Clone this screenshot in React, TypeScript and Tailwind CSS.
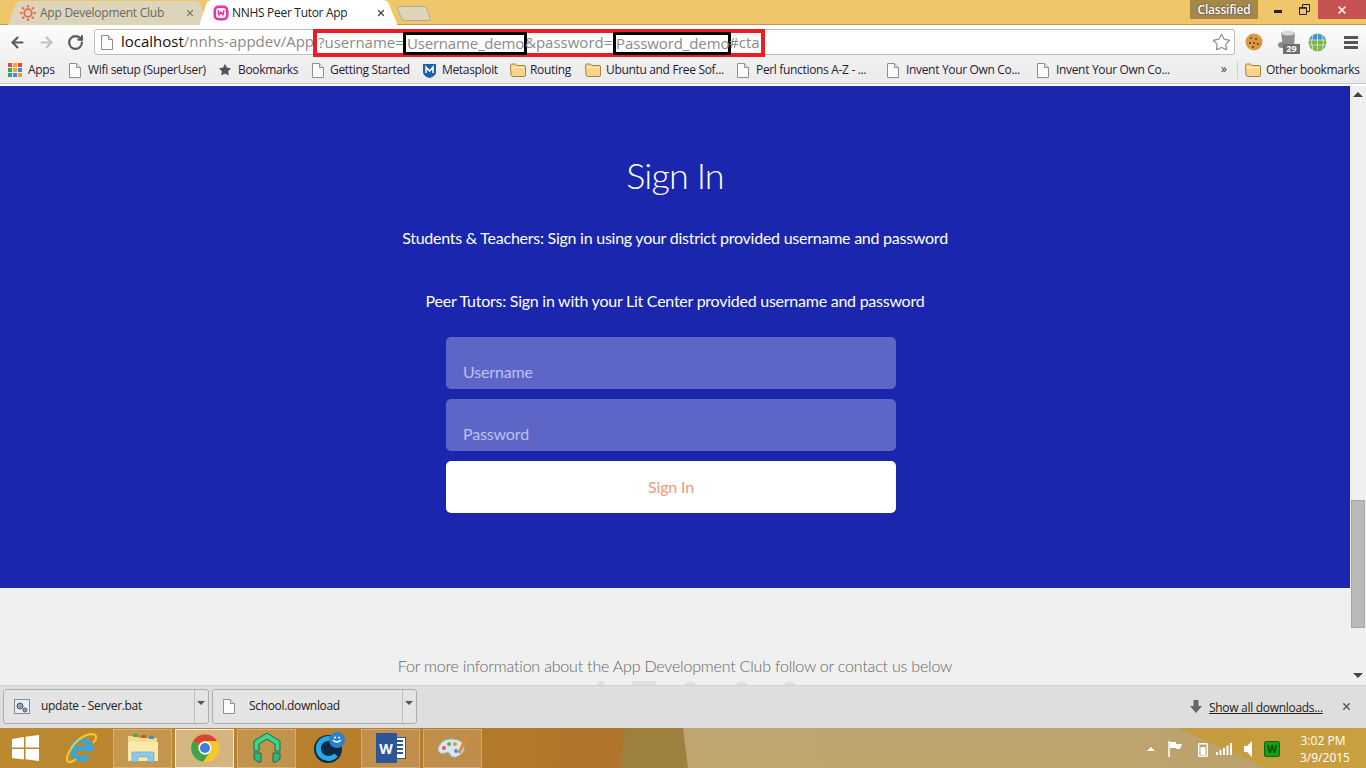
import React from 'react';
import { ArrowLeft, ArrowRight, RotateCw, Star, X } from 'lucide-react';

const chrome = "font-['Open_Sans',sans-serif]";

const PageIcon = ({ className = '' }: { className?: string }) => (
  <svg width="12" height="15" viewBox="0 0 12 15" className={className}>
    <path d="M.5.5h7l4 4v10H.5z" fill="#fbfbfb" stroke="#8f8f8f" />
    <path d="M7.5.5v4h4" fill="#e4e4e4" stroke="#8f8f8f" />
  </svg>
);

const FolderIcon = () => (
  <svg width="16" height="14" viewBox="0 0 16 14">
    <path d="M.5 2.500q0-1.500 1.500-1.500h3.500l1.500 1.500h7q1.500 0 1.500 1.500v8q0 1.500-1.500 1.500h-11q-1.500 0-2-1.500z" fill="#f8d48c" stroke="#a9803c" />
    <path d="M1.500 4.500h13" stroke="#fff0c8" />
  </svg>
);

const Bookmark = ({ icon, label, width, gap = 'gap-[6px]' }: { icon: React.ReactNode; label: string; width: number; gap?: string }) => (
  <div className={`flex items-center shrink-0 ${gap}`} style={{ width }}>
    {icon}
    <span className="whitespace-nowrap text-[12px] tracking-[-0.33px] text-[#2a1a35]">{label}</span>
  </div>
);

const CanvasIcon = () => (
  <svg width="16" height="16" viewBox="0 0 16 16">
    <circle cx="8" cy="8" r="3.800" fill="none" stroke="#e8674a" strokeWidth="1.800" />
    <g fill="#e8674a">
      <circle cx="8" cy="1.200" r="1.200" /><circle cx="8" cy="14.800" r="1.200" /><circle cx="1.200" cy="8" r="1.200" /><circle cx="14.800" cy="8" r="1.200" />
      <circle cx="3.200" cy="3.200" r="1.200" /><circle cx="12.800" cy="3.200" r="1.200" /><circle cx="3.200" cy="12.800" r="1.200" /><circle cx="12.800" cy="12.800" r="1.200" />
    </g>
  </svg>
);

const TabBar = () => (
  <div className={`${chrome} relative h-[25px] shrink-0 bg-[#efc76a] border-b border-[#b9984f]`}>
    <div className="absolute left-[8px] top-[1px] h-[24px] w-[198px] bg-[#dcd5bc] [clip-path:polygon(0_100%,4%_8%,7%_0,95%_0,97%_8%,100%_100%)] flex items-center pl-[12px] gap-[4px]">
      <CanvasIcon />
      <span className="text-[12px] tracking-[-0.25px] text-[#6a6a60] whitespace-nowrap">App Development Club</span>
      <X size={10} strokeWidth={3} className="absolute left-[177px] top-[7px] text-[#7b7b72]" />
    </div>
    <div className="absolute left-[199px] top-0 h-[26px] w-[199px] bg-white [clip-path:polygon(0_100%,4%_8%,6%_0,93%_0,95%_8%,100%_100%)] flex items-center pl-[14px] gap-[3px]">
      <svg width="16" height="16" viewBox="0 0 16 16">
        <rect x="0.500" y="0.500" width="15" height="15" rx="5" fill="#f032a8" />
        <rect x="3" y="3" width="10" height="10" rx="3" fill="#fff" />
        <path d="M5 5l1 5 2-3 2 3 1-5" fill="none" stroke="#f032a8" strokeWidth="1.400" />
      </svg>
      <span className="text-[12px] tracking-[-0.3px] text-[#222] whitespace-nowrap">NNHS Peer Tutor App</span>
      <X size={10} strokeWidth={3} className="absolute left-[177px] top-[8px] text-[#444]" />
    </div>
    <div className="absolute left-[399px] top-[6px] h-[15px] w-[30px] bg-[#dcd5bc] border border-[#b8ab84] rounded-[3px] [transform:skewX(20deg)]" />
    <div className="absolute left-[1190px] top-0 h-[19px] w-[68px] bg-[#a5874a] flex items-center justify-center text-[12px] font-semibold tracking-[-0.2px] text-white [text-shadow:0_0_2px_#333]">
      Classified
    </div>
    <div className="absolute right-0 top-0 h-[19px] w-[48px] bg-[#c75252] flex items-center justify-center">
      <X size={12} strokeWidth={3} className="text-white" />
    </div>
    <span className="absolute left-[1274px] top-[10px] h-[3px] w-[8px] bg-[#222]" />
    <svg width="11" height="11" viewBox="0 0 11 11" className="absolute left-[1299px] top-[4px]">
      <path d="M.5 3.500h7v7h-7zM3.500 3V.5h7v7H8" fill="none" stroke="#222" />
      <path d="M1 4h6" stroke="#222" strokeWidth="1.500" />
    </svg>
  </div>
);

const Toolbar = () => (
  <div className={`${chrome} h-[32px] shrink-0 flex items-center pt-[2px] bg-[linear-gradient(#fdfdfd,#f1f1f1)]`}>
    <div className="flex items-center w-[94px] shrink-0 pl-[9px] gap-[12px]">
      <ArrowLeft size={17} strokeWidth={3} className="text-[#5a5a5a]" />
      <ArrowRight size={17} strokeWidth={3} className="text-[#c2c2c2]" />
      <RotateCw size={17} strokeWidth={3} className="text-[#5a5a5a]" />
    </div>
    <div className="w-[1141px] h-[26px] shrink-0 flex items-center bg-white border border-[#bdbdbd] rounded-[3px] text-[15px] text-[#8a8a8a] relative">
      <PageIcon className="ml-[6px] mr-[8px]" />
      <span className="text-[#111] -mt-[1px]">localhost</span>
      <span className="-mt-[1px]">/nnhs-appdev/App</span>
      <div className="absolute left-[218px] -top-[1px] h-[28px] w-[452px] border-[4px] border-[#ed1c24] flex items-center text-[15px] whitespace-nowrap pb-[2px]">
        <span className="pl-[1px]">?username=</span>
        <span className="absolute left-[86px] -top-[1px] h-[23px] w-[124px] border-[3px] border-black flex items-center pl-[1px] pb-[1px] tracking-[-0.2px]">Username_demo</span>
        <span className="absolute left-[208px]">&amp;password=</span>
        <span className="absolute left-[296px] -top-[1px] h-[23px] w-[118px] border-[3px] border-black flex items-center pb-[1px] tracking-[-0.1px]">Password_demo</span>
        <span className="absolute left-[412px]">#cta</span>
      </div>
      <Star size={19} strokeWidth={1.5} className="absolute right-[3px] top-[3px] text-[#8c8c8c]" />
    </div>
    <div className="flex items-center ml-[10px] relative">
      <svg width="18" height="18" viewBox="0 0 18 18" className="mr-[14px]">
        <circle cx="9" cy="9" r="8.500" fill="#d99a45" />
        <g fill="#6a3a14"><circle cx="6" cy="5" r="1" /><circle cx="11" cy="6" r="1" /><circle cx="5" cy="10" r="1" /><circle cx="9" cy="10" r="1" /><circle cx="13" cy="11" r="1" /><circle cx="8" cy="14" r="1" /></g>
      </svg>
      <div className="relative w-[20px] h-[22px] mr-[11px]">
        <svg width="18" height="20" viewBox="0 0 18 20" className="absolute left-[1px] -top-[1px]">
          <path d="M3 2h14l-1 16H5z" fill="#8e8e8e" />
          <ellipse cx="10" cy="3" rx="7" ry="2.500" fill="#d8d8d8" />
          <ellipse cx="4" cy="15" rx="4" ry="3" fill="#8a8a8a" />
        </svg>
        <span className="absolute left-[6px] top-[13px] h-[10px] w-[17px] bg-[#6f6f6f] text-white text-[9px] font-bold leading-[10px] text-center">29</span>
      </div>
      <svg width="19" height="19" viewBox="0 0 19 19">
        <circle cx="9.500" cy="9.500" r="9" fill="#7cb342" />
        <path d="M1 7a9 9 0 0 1 17 0z" fill="#4a90d9" />
        <path d="M9.500.5v18M1 7h17M1 12h17M5 2q-3 7 0 15M14 2q3 7 0 15" fill="none" stroke="#d5e8f5" strokeWidth=".8" />
      </svg>
      <div className="flex flex-col gap-[2px] ml-[17px]">
        <span className="block w-[14px] h-[3px] bg-[#555]" />
        <span className="block w-[14px] h-[3px] bg-[#555]" />
        <span className="block w-[14px] h-[3px] bg-[#555]" />
      </div>
    </div>
  </div>
);

const AppsIcon = () => (
  <div className="grid grid-cols-3 gap-[1px] w-[14px]">
    {['#e8453c', '#f5a623', '#e8453c', '#34a853', '#f5a623', '#4285f4', '#34a853', '#4285f4', '#e8a33c'].map((c, i) => (
      <span key={i} className="block w-[4px] h-[4px]" style={{ backgroundColor: c }} />
    ))}
  </div>
);

const BookmarksBar = () => (
  <div className={`${chrome} relative h-[27px] shrink-0 flex items-center pl-[8px] bg-[linear-gradient(#f1f1f1,#ebebeb)] border-b border-[#c8c8c8]`}>
    <Bookmark icon={<AppsIcon />} label="Apps" width={61} />
    <Bookmark icon={<PageIcon />} label="Wifi setup (SuperUser)" width={149} gap="gap-[7px]" />
    <Bookmark icon={<Star size={14} fill="#555" strokeWidth={0} />} label="Bookmarks" width={94} />
    <Bookmark icon={<PageIcon />} label="Getting Started" width={111} />
    <Bookmark
      icon={
        <svg width="13" height="15" viewBox="0 0 13 15">
          <path d="M0 1h13v8q0 4-6.500 6Q0 13 0 9z" fill="#1f5fa8" />
          <path d="M3 10V4l3.500 4L10 4v6" fill="none" stroke="#fff" strokeWidth="1.500" />
        </svg>
      }
      label="Metasploit"
      width={87}
    />
    <Bookmark icon={<FolderIcon />} label="Routing" width={75} gap="gap-[4px]" />
    <Bookmark icon={<FolderIcon />} label="Ubuntu and Free Sof..." width={152} gap="gap-[5px]" />
    <Bookmark icon={<PageIcon />} label="Perl functions A-Z - ..." width={150} gap="gap-[7px]" />
    <Bookmark icon={<PageIcon />} label="Invent Your Own Co..." width={150} gap="gap-[7px]" />
    <Bookmark icon={<PageIcon />} label="Invent Your Own Co..." width={150} gap="gap-[7px]" />
    <span className="absolute left-[1221px] top-[3px] text-[12px] text-[#333]">»</span>
    <span className="absolute left-[1237px] top-[4px] h-[18px] w-px bg-[#d0d0d0]" />
    <div className="absolute left-[1245px] top-[4px]">
      <Bookmark icon={<FolderIcon />} label="Other bookmarks" width={118} gap="gap-[5px]" />
    </div>
  </div>
);

const Field = ({ label }: { label: string }) => (
  <div className="h-[52px] w-[450px] rounded-[5px] bg-[#5d66c6] pl-[17px] pt-[23px] text-[16px] leading-[24px] tracking-[-0.15px] text-[#bcc2ec]">
    {label}
  </div>
);

const Page = () => (
  <div className="flex-1 min-h-0 flex font-['Lato',sans-serif] border-t-2 border-white">
    <div className="flex-1 min-w-0 flex flex-col">
      <div className="h-[502px] shrink-0 bg-[#1a26ae] flex flex-col items-center text-white">
        <h1 className="text-[36px] leading-[44px] mt-[67px] font-light tracking-[-0.9px]">Sign In</h1>
        <p className="text-[16px] leading-[24px] mt-[29px] tracking-[-0.25px]">Students &amp; Teachers: Sign in using your district provided username and password</p>
        <p className="text-[16px] leading-[24px] mt-[39px] tracking-[-0.25px]">Peer Tutors: Sign in with your Lit Center provided username and password</p>
        <div className="flex flex-col gap-[10px] mt-[24px] -ml-[8px]">
          <Field label="Username" />
          <Field label="Password" />
          <button className="h-[52px] w-[450px] rounded-[5px] bg-white text-[16px] tracking-[-0.15px] text-[#ee9a7a]">Sign In</button>
        </div>
      </div>
      <div className="flex-1 bg-[#f0f0f0] overflow-hidden flex flex-col items-center">
        <p className="mt-[66px] text-[16px] leading-[24px] font-light tracking-[-0.19px] text-[#666]">For more information about the App Development Club follow or contact us below</p>
        <div className="flex items-start h-[10px] mt-[3px] ml-[44px]">
          <span className="block h-[8px] w-[8px] rounded-t-[4px] bg-[#e0e0e0]" />
          <span className="block h-[8px] w-[24px] ml-[27px] bg-[#e0e0e0]" />
          <span className="block h-[8px] w-[14px] ml-[27px] rounded-t-full bg-[#e0e0e0]" />
          <span className="block h-[8px] w-[14px] ml-[38px] rounded-t-full bg-[#e0e0e0]" />
          <span className="block h-[8px] w-[14px] ml-[34px] rounded-t-[8px] bg-[#e0e0e0]" />
        </div>
      </div>
    </div>
    <div className="w-[16px] shrink-0 bg-[#f0f0f0] relative">
      <span className="absolute left-[3px] top-[6px] border-x-[5px] border-x-transparent border-b-[5px] border-b-[#444]" />
      <div className="absolute left-[1px] top-[414px] h-[128px] w-[14px] bg-[#b9b9b9] border border-[#a8a8a8]" />
      <span className="absolute left-[3px] top-[587px] border-x-[5px] border-x-transparent border-t-[5px] border-t-[#444]" />
    </div>
  </div>
);

const DownloadItem = ({ icon, name, width, gap }: { icon: React.ReactNode; name: string; width: number; gap: string }) => (
  <div className="h-[35px] flex rounded-[3px] border border-[#aeaeae] bg-[#e4e4e4] shrink-0" style={{ width }}>
    <div className={`flex-1 flex items-center pl-[10px] text-[12px] tracking-[-0.33px] text-[#222] ${gap}`}>
      {icon}
      <span>{name}</span>
    </div>
    <div className="w-[14px] border-l border-[#bdbdbd] pt-[11px] pl-[2px]">
      <span className="block w-0 border-x-[4px] border-x-transparent border-t-[4px] border-t-[#555]" />
    </div>
  </div>
);

const DownloadBar = () => (
  <div className={`${chrome} h-[43px] shrink-0 bg-[#dedede] border-t border-[#d0d0d0] flex items-center pl-[3px] pb-[2px] gap-[3px] relative`}>
    <DownloadItem
      width={206}
      gap="gap-[11px]"
      name="update - Server.bat"
      icon={
        <svg width="16" height="15" viewBox="0 0 16 15">
          <rect x=".5" y=".5" width="15" height="14" fill="#e8eef5" stroke="#7f8a96" />
          <circle cx="6" cy="7" r="3" fill="#8fa3b8" stroke="#556" />
          <circle cx="11" cy="11" r="2" fill="#8fa3b8" stroke="#556" />
        </svg>
      }
    />
    <DownloadItem width={205} gap="gap-[14px]" name="School.download" icon={<PageIcon />} />
    <svg width="12" height="13" viewBox="0 0 12 13" className="absolute left-[1190px] top-[14px]">
      <path d="M3.500 0h5v6H12L6 13 0 6h3.500z" fill="#666" />
    </svg>
    <span className="absolute left-[1209px] top-[13px] text-[12px] tracking-[-0.3px] underline text-[#222]">Show all downloads...</span>
    <X size={11} strokeWidth={3} className="absolute left-[1341px] top-[15px] text-[#555]" />
  </div>
);

const TaskButton = ({ children, active = false }: { children: React.ReactNode; active?: boolean }) => (
  <div className={`relative h-[39px] w-[59px] shrink-0 flex items-center justify-center border ${active ? 'border-white/80 bg-white/40' : 'border-white/25 bg-white/15'}`}>
    {children}
  </div>
);

const Plain = ({ children }: { children: React.ReactNode }) => (
  <div className="relative h-[39px] w-[59px] shrink-0 flex items-center justify-center">{children}</div>
);

const Taskbar = () => (
  <div className={`${chrome} h-[40px] shrink-0 relative flex items-center gap-[3px] pl-[51px] bg-[linear-gradient(90deg,#bb8a30_0%,#b8802c_22%,#b0742b_46%,#c49a3e_86%,#c9a040_100%)]`}>
    {/* wallpaper bands behind the buttons */}
    <div className="absolute inset-0 bg-[#9d7f3e] [clip-path:polygon(625px_0,683px_0,688px_100%,620px_100%)]" />
    <div className="absolute inset-0 bg-[linear-gradient(90deg,#c3ab77,#bba26c)] [clip-path:polygon(683px_0,1177px_0,1267px_100%,688px_100%)]" />
    <svg width="27" height="26" viewBox="0 0 27 26" className="absolute left-[12px] top-[7px]">
      <path d="M0 4l12-2v10.500H0zM13.500 1.800L27 0v12.500H13.500zM0 14h12v10.500L0 23zM13.500 14H27v12l-13.500-1.800z" fill="#fff" />
    </svg>
    <Plain>
      <svg width="32" height="30" viewBox="0 0 32 30">
        <path d="M8.500 15.500H26A9.500 9.500 0 1 0 23.500 23" fill="none" stroke="#2ea9e6" strokeWidth="4.500" />
        <path d="M3 29C-1 25 8 10 16 5 24 0 31 0 31 4q0 3-3 6M3 29q3 1 8-3" fill="none" stroke="#f5c22c" strokeWidth="2.200" />
      </svg>
    </Plain>
    <TaskButton>
      <svg width="32" height="30" viewBox="0 0 32 30">
        <path d="M1 3h9l2 2h18v6H1z" fill="#f5dc8f" />
        <path d="M1 9h30v19H1z" fill="#fbeaa8" />
        <path d="M6 1h5v3H6z" fill="#3fae55" /><path d="M14 2h5v3h-5z" fill="#d94f3d" /><path d="M22 3h5v3h-5z" fill="#3d8fd9" />
        <path d="M5 29V19h22v10h-6v-5H11v5z" fill="#8cc8e8" stroke="#5fa5cc" strokeWidth=".6" />
      </svg>
    </TaskButton>
    <TaskButton active>
      <svg width="30" height="30" viewBox="0 0 30 30">
        <circle cx="15" cy="15" r="14" fill="#f5c92c" />
        <path d="M3 8A14 14 0 0 1 27.100 8H15a7 7 0 0 0-6 3.500z" fill="#d94436" />
        <path d="M3 8a14 14 0 0 0 10 20.900l6-8.400a7 7 0 0 1-10-9z" fill="#3fa34d" />
        <circle cx="15" cy="15" r="6.500" fill="#fff" />
        <circle cx="15" cy="15" r="5" fill="#3f7fd9" />
      </svg>
    </TaskButton>
    <TaskButton>
      <svg width="32" height="32" viewBox="0 0 32 32">
        <path d="M16 1l13 8v10h-5v-7l-8-5-8 5v7H3V9z" fill="#3fd48c" stroke="#176b48" />
        <path d="M3 21h7v9H7l-4-3zM22 21h7v6l-4 3h-3z" fill="#2fb877" stroke="#176b48" />
      </svg>
    </TaskButton>
    <Plain>
      <svg width="32" height="32" viewBox="0 0 32 32">
        <circle cx="15" cy="17" r="14" fill="#0d2a44" />
        <path d="M22 9a10 10 0 1 0 1 14" fill="none" stroke="#29a8e6" strokeWidth="5" />
        <circle cx="24" cy="8" r="8" fill="#2a7fd0" />
        <path d="M20 8q4 4 8 0" fill="none" stroke="#fff" strokeWidth="1.300" />
        <circle cx="22" cy="5.500" r="1" fill="#fff" /><circle cx="26" cy="5.500" r="1" fill="#fff" />
      </svg>
    </Plain>
    <TaskButton>
      <div className="relative h-[30px] w-[30px]">
        <div className="absolute right-0 top-[4px] h-[22px] w-[20px] bg-white border border-[#2b579a] flex flex-col gap-[2px] p-[2px] items-end">
          <span className="block h-[2px] w-[8px] bg-[#2b579a]" />
          <span className="block h-[2px] w-[8px] bg-[#2b579a]" />
          <span className="block h-[2px] w-[8px] bg-[#2b579a]" />
          <span className="block h-[2px] w-[8px] bg-[#2b579a]" />
        </div>
        <div className="absolute left-0 top-0 h-[30px] w-[21px] bg-[#2b579a] flex items-center justify-center text-white text-[14px] font-bold">W</div>
      </div>
    </TaskButton>
    <TaskButton>
      <svg width="32" height="28" viewBox="0 0 32 28">
        <path d="M1 16Q2 6 14 5q11 0 13 7 1 8-8 11-5 1-6-3-2-3-5-1-5 2-7-3z" fill="#d8e6f0" stroke="#9bb" />
        <circle cx="7" cy="14" r="2" fill="#e25656" /><circle cx="12" cy="10" r="2" fill="#5aae5a" /><circle cx="18" cy="10" r="2" fill="#e0a030" /><circle cx="19" cy="17" r="2" fill="#5a8fd0" />
        <path d="M22 19L30 2" stroke="#d98a40" strokeWidth="3" />
      </svg>
    </TaskButton>
    <span className="absolute left-[1147px] top-[19px] border-x-[4px] border-x-transparent border-b-[4px] border-b-white" />
    <svg width="16" height="16" viewBox="0 0 16 16" className="absolute left-[1168px] top-[13px]">
      <path d="M1 0v16" stroke="#fff" strokeWidth="1.500" />
      <path d="M2 1h6v2h6l-2 5H8V7H2z" fill="#fff" />
    </svg>
    <svg width="10" height="15" viewBox="0 0 10 15" className="absolute left-[1198px] top-[14px]">
      <rect x=".7" y="1.700" width="8.600" height="12.600" rx="1" fill="none" stroke="#fff" strokeWidth="1.400" />
      <rect x="2.500" y="5" width="5" height="8" fill="#fff" />
    </svg>
    <svg width="16" height="12" viewBox="0 0 16 12" className="absolute left-[1216px] top-[15px]">
      <path d="M0 9h2v3H0zM3.500 7h2v5h-2zM7 5h2v7H7zM10.500 2.500h2V12h-2zM14 0h2v12h-2z" fill="#fff" />
    </svg>
    <svg width="8" height="16" viewBox="0 0 8 16" className="absolute left-[1244px] top-[13px]">
      <path d="M0 5h3l5-5v16l-5-5H0z" fill="#fff" />
    </svg>
    <div className="absolute left-[1264px] top-[13px] h-[16px] w-[16px] bg-[#14a014] border border-[#0a6a0a] rounded-[2px] flex items-center justify-center text-[10px] font-bold text-[#0a4a0a]">W</div>
    <div className="absolute left-[1300px] top-[4px] w-[46px] text-center text-[12px] leading-[17px] text-white">
      <div>3:02 PM</div>
      <div>3/9/2015</div>
    </div>
  </div>
);

const App = () => {
  return (
    <div className="h-screen w-full flex flex-col overflow-hidden">
      <TabBar />
      <Toolbar />
      <BookmarksBar />
      <Page />
      <DownloadBar />
      <Taskbar />
    </div>
  );
};

export default App;
